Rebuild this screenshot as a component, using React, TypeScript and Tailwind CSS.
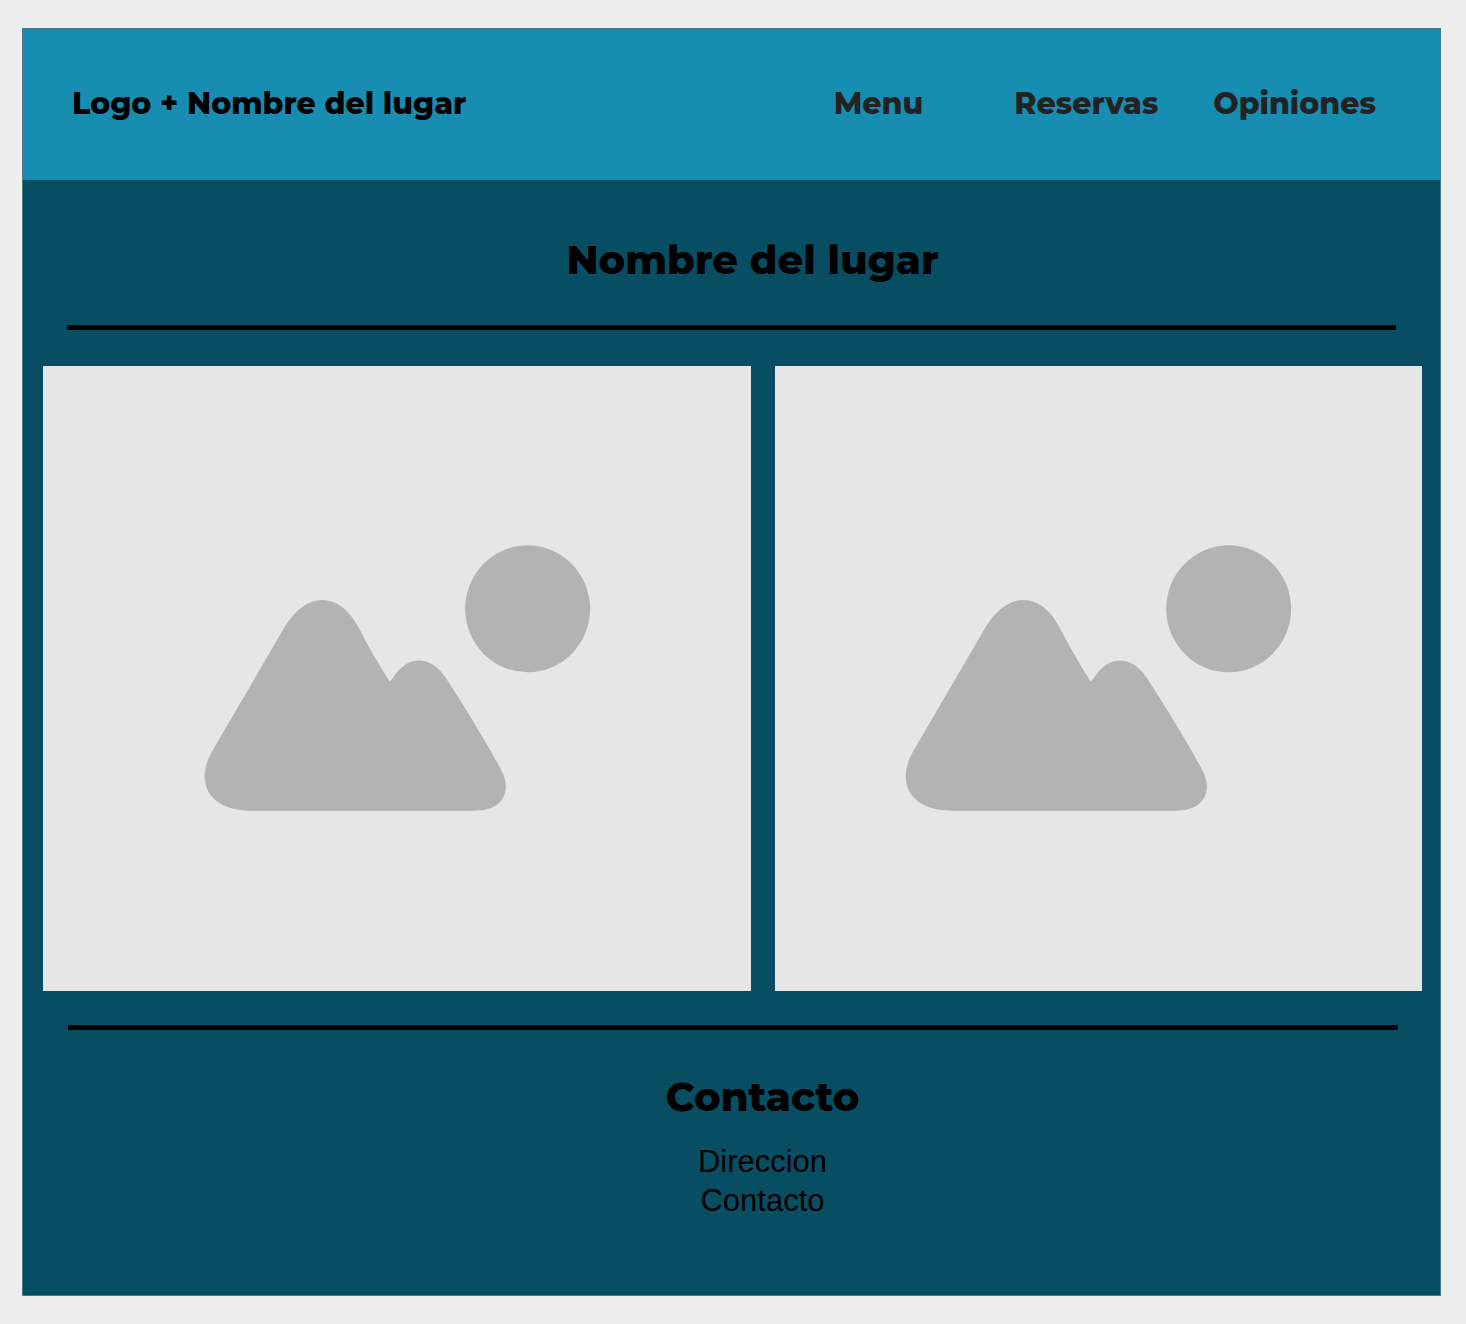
function Picture({ viewBox, label }: { viewBox: string; label: string }) {
  return (
    <svg viewBox={viewBox} role="img" aria-label={label} className="block w-full bg-[#e6e6e6]">
      <g fill="#b3b3b3">
        <ellipse cx="485" cy="243" rx="62.5" ry="63.5" />
        <path d="M242 261C263 226 296 224 316 262Q328 286 347 316L351 311C365 289 388 289 403 312Q433 358 458 403C470 425 461 445 432 445H208C168 445 151 419 169 386Z" />
      </g>
    </svg>
  );
}

export default function App() {
  return (
    <div className="min-h-screen bg-[#eeeeee] pt-7 pr-[25px] pb-7 pl-[22px] font-['Montserrat','Open_Sans',sans-serif] text-black">
      <div className="border border-[#3f7b8b] bg-[#074e62]">
        <header className="flex h-[151px] items-center justify-between bg-[#178eb1] pr-16 pb-0.5 pl-[49px] text-[30px] font-extrabold">
          <a href="#inicio">Logo + Nombre del lugar</a>
          <nav className="flex text-[#222222]">
            <a href="#menu" className="mr-[91px]">Menu</a>
            <a href="#reservas" className="mr-[55px]">Reservas</a>
            <a href="#opiniones">Opiniones</a>
          </nav>
        </header>
        <main>
          <h1 className="pt-[50px] pb-[35px] pl-[42px] text-center text-[40px] leading-[60px] font-extrabold">Nombre del lugar</h1>
          <hr className="mx-11 border-0 border-t-[5px] border-black" />
          <div className="mt-9 grid grid-cols-[709fr_647fr] gap-6 pr-[18px] pl-5">
            <Picture viewBox="0 0 709 625" label="Imagen del lugar" />
            <Picture viewBox="31 0 647 625" label="Segunda imagen del lugar" />
          </div>
          <hr className="mr-[42px] ml-[45px] mt-[34px] border-0 border-t-[5px] border-black" />
        </main>
        <footer className="pt-[37px] pb-[75px] pl-[62px] text-center">
          <h2 className="text-[40px] leading-[60px] font-extrabold">Contacto</h2>
          <address className="mt-[15px] font-['Liberation_Sans',sans-serif] text-[31px] leading-[39px] not-italic">
            <p>Direccion</p>
            <p>Contacto</p>
          </address>
        </footer>
      </div>
    </div>
  );
}
